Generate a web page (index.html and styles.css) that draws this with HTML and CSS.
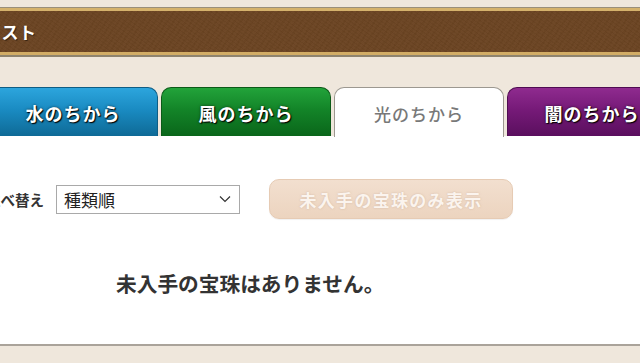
FILE: index.html
```html
<!DOCTYPE html>
<html lang="ja">
<head>
<meta charset="utf-8">
<title>宝珠リスト</title>
<link rel="stylesheet" href="styles.css">
</head>
<body>
<div class="page">
  <div class="header">
    <div class="header-inner"><span class="header-title">宝珠リスト</span></div>
  </div>
  <div class="tabs">
    <div class="tab tab-water">水のちから</div>
    <div class="tab tab-wind">風のちから</div>
    <div class="tab tab-light">光のちから</div>
    <div class="tab tab-dark">闇のちから</div>
  </div>
  <div class="content">
    <div class="sort-row">
      <span class="sort-label">並べ替え</span>
      <div class="select">
        <span class="select-value">種類順</span>
        <svg class="chevron" width="12" height="8" viewBox="0 0 12 8"><path d="M1 1.5 L6 6.5 L11 1.5" fill="none" stroke="#333" stroke-width="1.2"/></svg>
      </div>
      <div class="filter-btn">未入手の宝珠のみ表示</div>
    </div>
    <p class="message">未入手の宝珠はありません。</p>
  </div>
</div>
</body>
</html>
```

FILE: styles.css
```css
* { box-sizing: border-box; }
html, body {
  margin: 0;
  padding: 0;
  background: #efe7dc;
  font-family: "Noto Sans CJK JP", "Noto Sans", sans-serif;
  overflow: hidden;
}
.page {
  width: 640px;
  height: 363px;
  padding-top: 7px;
}
.header {
  height: 50px;
  border-top: 1px solid #9a8f7a;
  border-bottom: 2px solid #8e846f;
  margin-left: -20px;
  margin-right: -20px;
}
.header-inner {
  height: 47px;
  border-top: 3px solid #d5b26c;
  border-bottom: 3px solid #d2ad66;
  background-color: #6b4422;
  background-image:
    repeating-linear-gradient(35deg, rgba(0,0,0,0.025) 0 1px, rgba(255,255,255,0.012) 1px 3px),
    repeating-linear-gradient(-55deg, rgba(0,0,0,0.02) 0 2px, rgba(255,255,255,0.01) 2px 5px);
  display: flex;
  align-items: center;
}
.header-title {
  margin-left: -31px;
  color: #fff;
  font-weight: 700;
  font-size: 17px;
  letter-spacing: 0.5px;
  text-shadow: 1px 1px 1px rgba(0,0,0,0.5);
}
.tabs {
  margin-top: 30px;
  margin-left: -12px;
  display: flex;
  gap: 3px;
  height: 49px;
}
.tab {
  flex: 0 0 170px;
  border-radius: 10px 10px 0 0;
  display: flex;
  align-items: center;
  justify-content: center;
  font-size: 18px;
  font-weight: 700;
  letter-spacing: 1px;
  color: #fff;
  text-shadow: 1px 1px 1px #000, 0 0 3px rgba(0,0,0,0.6);
  padding-top: 2px;
}
.tab-water {
  background: linear-gradient(#2ca5dd, #1a8bc2 45%, #0e6a96);
  border: 1px solid #0f5d84;
  border-bottom: none;
}
.tab-wind {
  background: linear-gradient(#22a33a, #138428 45%, #0a661a);
  border: 1px solid #0b5a18;
  border-bottom: none;
}
.tab-light {
  background: #fff;
  border: 1px solid #9c9890;
  border-bottom: none;
  color: #787878;
  font-size: 17px;
  font-weight: 500;
  text-shadow: none;
  margin-bottom: -1px;
}
.tab-dark {
  background: linear-gradient(#8f2b8f, #761a78 45%, #5a0f5e);
  border: 1px solid #4f0c52;
  border-bottom: none;
}
.content {
  background: #fff;
  height: 210px;
  border-bottom: 2px solid #aaa39a;
  padding-top: 43px;
}
.sort-row {
  display: flex;
  align-items: center;
  height: 40px;
}
.sort-label {
  margin-left: -14px;
  font-size: 14.5px;
  font-weight: 700;
  color: #333;
}
.select {
  margin-left: 12px;
  width: 184px;
  height: 29px;
  border: 1px solid #a9a9a9;
  background: #fff;
  display: flex;
  align-items: center;
  justify-content: space-between;
  padding: 0 8px 0 7px;
}
.select-value {
  font-size: 17px;
  color: #222;
}
.filter-btn {
  margin-left: 29px;
  width: 244px;
  height: 40px;
  border-radius: 10px;
  background: linear-gradient(#f2dfcf, #ecd4bf);
  border: 1px solid #e6cbb4;
  box-shadow: 0 1px 1px rgba(0,0,0,0.06);
  display: flex;
  align-items: center;
  justify-content: center;
  color: #fbf4ee;
  font-size: 17px;
  font-weight: 700;
  letter-spacing: 1.3px;
  text-shadow: 0 0 2px rgba(190,160,140,0.6);
}
.message {
  margin: 50px 0 0 116px;
  line-height: 28px;
  font-size: 20.7px;
  font-weight: 700;
  color: #333;
}
```
